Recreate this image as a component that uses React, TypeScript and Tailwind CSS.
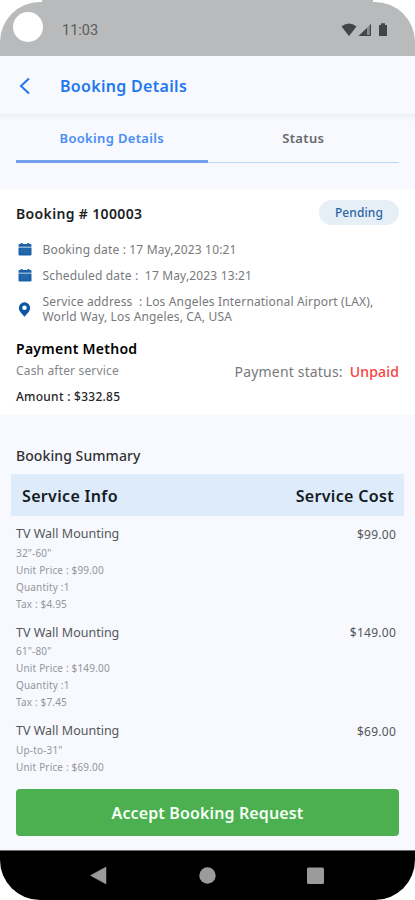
import { ReactNode } from "react";

interface ServiceItem {
  name: string;
  variant: string;
  unitPrice: string;
  cost: string;
  quantity?: number;
  tax?: string;
}

const services: ServiceItem[] = [
  { name: "TV Wall Mounting", variant: '32"-60"', unitPrice: "$99.00", cost: "$99.00", quantity: 1, tax: "$4.95" },
  { name: "TV Wall Mounting", variant: '61"-80"', unitPrice: "$149.00", cost: "$149.00", quantity: 1, tax: "$7.45" },
  { name: "TV Wall Mounting", variant: 'Up-to-31"', unitPrice: "$69.00", cost: "$69.00" },
];

const CalendarIcon = () => (
  <svg width="14" height="13" viewBox="0 0 14 13" fill="#1c62a8">
    <path d="M1.800 1H2.700V0H4.600V1h4.800V0h1.900V1h.9A1.300 1.300 0 0 1 13.500 2.300V3.700H.5V2.300A1.300 1.300 0 0 1 1.800 1Z" />
    <path d="M.5 4.400h13v6.800a1.300 1.300 0 0 1-1.300 1.300H1.800A1.300 1.300 0 0 1 .5 11.200Z" />
    <path d="M3 6.500h8M3 9h8" stroke="#4d87c0" strokeWidth=".7" strokeDasharray="1.600 1" />
  </svg>
);

const PinIcon = () => (
  <svg width="13" height="15" viewBox="0 0 12 15" fill="#0b55a4">
    <path
      fillRule="evenodd"
      d="M6 .3A5.600 5.600 0 0 0 .4 5.900C.4 9 3 11 6 14.700 9 11 11.600 9 11.600 5.900A5.600 5.600 0 0 0 6 .3ZM6 3.500a2.300 2.300 0 1 1 0 4.600 2.300 2.300 0 0 1 0-4.600Z"
    />
  </svg>
);

const StatusBar = () => (
  <div className="h-14 shrink-0">
    <div className="mx-[42px] h-[2px] bg-[#b9babb]" />
    <div className="flex h-[54px] items-center rounded-t-[40px] bg-[#b9babb] pr-[26px] pl-[13px]">
      <div className="mb-[4px] size-[30px] rounded-full bg-white" />
      <span className="mt-[3px] ml-[19px] font-[Roboto] text-[14.500px] text-[#5b5c5d]">11:03</span>
      <svg className="mt-[2px] ml-auto" width="48" height="16" viewBox="0 0 48 16" fill="#434445">
        <path d="M.5 4.500Q8-1.500 15.500 4.500L8 14Z" />
        <path d="M17.500 14 30 2V14Z" opacity=".4" />
        <path d="M17.500 14 26 6V14ZM28.800 3.300 30 2V14H28.800ZM26 13h3v1h-3Z" />
        <path d="M38 3h2V1.200h4V3h2v11h-8Z" />
      </svg>
    </div>
  </div>
);

const Header = () => (
  <header className="flex h-[58px] shrink-0 items-center bg-[#f7f9fe] pl-[19px] pt-[2px]">
    <svg width="12" height="18" viewBox="0 0 12 18" fill="none" stroke="#1f78ee" strokeWidth="2">
      <path d="M10 1.500 2 9l8 7.500" />
    </svg>
    <h1 className="ml-[29px] text-[16px] font-semibold tracking-[0.310px] text-[#1f78ee]">Booking Details</h1>
  </header>
);

const Tabs = () => (
  <div className="h-[75px] shrink-0 bg-linear-to-b from-[#edf2f7] to-[#f7f9fe] to-10% px-4">
    <div className="flex h-[49px] text-center text-[13px] font-semibold tracking-[0.330px]">
      <div className="flex-1 border-b-[3px] border-[#709fec] pt-[14px] leading-5 text-[#478df4]">Booking Details</div>
      <div className="flex-1 border-b-[1.500px] border-[#bcd6fb] pt-[14px] leading-5 text-[#67696c]">Status</div>
    </div>
  </div>
);

const InfoRow = ({ icon, children }: { icon: ReactNode; children: ReactNode }) => (
  <div className="flex items-center text-[12px] leading-[15px] tracking-[0.160px] text-[#77797c]">
    <div className="flex w-[26.500px] shrink-0 pl-[1.500px]">{icon}</div>
    <div className="whitespace-pre">{children}</div>
  </div>
);

const BookingInfo = () => (
  <section className="h-[226px] shrink-0 bg-white px-4 pt-[11px]">
    <div className="flex h-[25px] items-center justify-between">
      <h2 className="pt-px text-[14px] font-semibold tracking-[0.350px] text-[#1c1d1e]">Booking # 100003</h2>
      <span className="flex h-[25px] w-20 items-center justify-center rounded-full bg-[#e6eef6] text-[12px] font-medium tracking-[0.100px] text-[#2c67a5]">
        Pending
      </span>
    </div>
    <div className="mt-[17px] flex flex-col gap-[11px]">
      <InfoRow icon={<CalendarIcon />}>Booking date : 17 May,2023 10:21</InfoRow>
      <InfoRow icon={<CalendarIcon />}>{"Scheduled date :  17 May,2023 13:21"}</InfoRow>
      <InfoRow icon={<PinIcon />}>
        {"Service address  : Los Angeles International Airport (LAX),\nWorld Way, Los Angeles, CA, USA"}
      </InfoRow>
    </div>
    <h2 className="mt-[15px] text-[14px] leading-5 font-semibold tracking-[0.270px] text-black">Payment Method</h2>
    <div className="flex h-6 items-center justify-between">
      <span className="text-[12px] tracking-[0.170px] text-[#848689]">Cash after service</span>
      <span className="text-[14px] tracking-[0.170px] text-[#77797c]">
        Payment status:<span className="ml-[7px] font-medium text-[#f5403f]">Unpaid</span>
      </span>
    </div>
    <p className="mt-[6px] text-[12px] leading-4 font-medium tracking-[0.260px] text-[#252627]">Amount : $332.85</p>
  </section>
);

const ServiceRow = ({ item }: { item: ServiceItem }) => (
  <div className="h-[98.500px] px-[5px]">
    <div className="flex h-5 items-center justify-between pr-[3px] text-[12.500px] text-[#55575a]">
      <span>{item.name}</span>
      <span className="text-[12px] tracking-[0.250px]">{item.cost}</span>
    </div>
    <div className="text-[10px] leading-[17px] tracking-[0.170px] text-[#94969a]">
      <p>{item.variant}</p>
      <p>Unit Price : {item.unitPrice}</p>
      {item.quantity && <p>Quantity :{item.quantity}</p>}
      {item.tax && <p>Tax : {item.tax}</p>}
    </div>
  </div>
);

const BookingSummary = () => (
  <section className="h-[374px] shrink-0 overflow-hidden px-[11px] pt-[31px]">
    <h2 className="pl-[5px] text-[14px] leading-5 font-medium tracking-[0.080px] text-[#303235]">Booking Summary</h2>
    <div className="mt-[8px] mb-[8.500px] flex h-[42px] items-center justify-between bg-[#deebfa] pt-px pr-[10px] pl-[11px] text-[16px] font-semibold tracking-[0.330px] text-[#131b24]">
      <span>Service Info</span>
      <span>Service Cost</span>
    </div>
    {services.map((item, i) => (
      <ServiceRow key={i} item={item} />
    ))}
  </section>
);

const NavBar = () => (
  <div className="flex h-[50px] shrink-0 items-center rounded-b-[40px] border-t border-[#6c6c6c] bg-black pl-[90px]">
    <svg width="234" height="20" viewBox="0 0 234 20" fill="#9b9b9b">
      <path d="M.5 9.500 16 1V18Z" stroke="#9b9b9b" strokeWidth=".5" strokeLinejoin="round" />
      <circle cx="117.500" cy="9.500" r="8.200" />
      <rect x="217" y="1.500" width="17" height="16.500" rx="1.500" />
    </svg>
  </div>
);

const App = () => {
  return (
    <div className="flex h-[900px] w-[415px] flex-col overflow-hidden bg-white font-['Noto_Sans',sans-serif]">
      <StatusBar />
      <div className="flex h-[794px] shrink-0 flex-col bg-[#f7f9fe]">
        <Header />
        <Tabs />
        <BookingInfo />
        <BookingSummary />
        <button className="mx-4 flex h-[47px] shrink-0 items-center justify-center rounded-[4px] bg-[#4caf50] text-[16px] font-semibold tracking-[0.130px] text-[#f5fff5]">
          Accept Booking Request
        </button>
      </div>
      <NavBar />
    </div>
  );
};

export default App;
